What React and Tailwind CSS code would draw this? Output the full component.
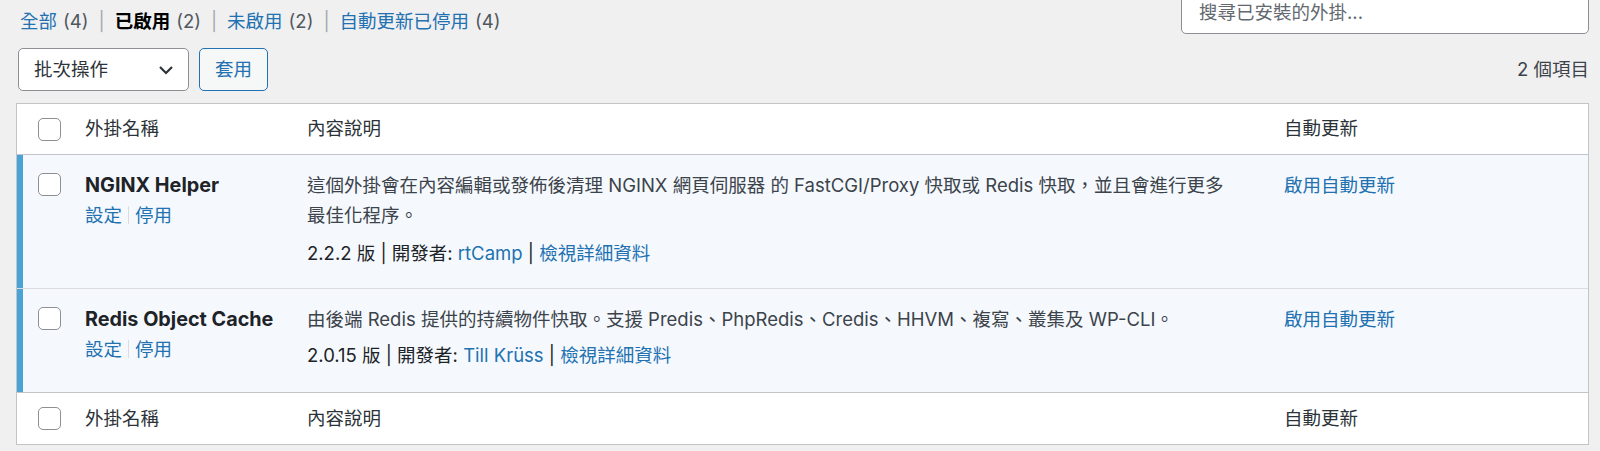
import { useState } from 'react'

const cols = 'grid grid-cols-[58px_222px_977px_1fr]'

function Checkbox() {
  return <span className="block w-[23px] h-[23px] rounded-[5px] border border-[#8c8f94] bg-white" />
}

function Filters() {
  const items = [
    { label: '全部', count: 4 },
    { label: '已啟用', count: 2, current: true },
    { label: '未啟用', count: 2 },
    { label: '自動更新已停用', count: 4 },
  ]
  return (
    <div className="pl-[4px] pt-[8px] leading-[27px] flex items-center text-[#50575e]">
      {items.map((it, i) => (
        <span key={it.label} className="flex items-center">
          {i > 0 && <span className="mx-[10px] text-[#a7aaad]">|</span>}
          <span className={it.current ? 'font-bold text-black' : 'text-[#2271b1]'}>{it.label}</span>
          <span className="ml-[6px]">({it.count})</span>
        </span>
      ))}
    </div>
  )
}

function PluginRow({ name, desc, version, author, last }) {
  return (
    <div className={`${cols} bg-[#f5f9fe] ${last ? '' : 'border-b border-[#dcdcde]'}`}>
      <div className="pl-[21px] pt-[18px] shadow-[inset_6px_0_0_#4aa3d6]"><Checkbox /></div>
      <div className="pl-[10px] pt-[15px] leading-[30px]">
        <div className="font-bold text-[#1d2327] text-[19.8px]">{name}</div>
        <div className="flex items-center text-[#2271b1]">
          <span>設定</span>
          <span className="mx-[6px] w-px h-[18px] bg-[#dcdcde]" />
          <span>停用</span>
        </div>
      </div>
      <div className={`pl-[10px] pr-[40px] pt-[15px] leading-[30px] ${last ? 'pb-[22px]' : 'pb-[20px]'}`}>
        <p className={`${last ? 'mb-[6px]' : 'mb-[8px]'} text-[#3c434a]`}>{desc}</p>
        <div className="text-[#1d2327]">
          {version} 版 | 開發者: <span className="text-[#2271b1]">{author}</span> | <span className="text-[#2271b1]">檢視詳細資料</span>
        </div>
      </div>
      <div className="pl-[10px] pt-[15px] leading-[30px] text-[#2271b1]">啟用自動更新</div>
    </div>
  )
}

function HeadRow({ top }) {
  return (
    <div className={`${cols} ${top ? 'h-[51px] border-b' : 'h-[52px] border-t'} items-center text-[#2c3338] border-[#c3c4c7]`}>
      <div className="pl-[21px]"><Checkbox /></div>
      <div className="pl-[10px]">外掛名稱</div>
      <div className="pl-[10px]">內容說明</div>
      <div className="pl-[10px]">自動更新</div>
    </div>
  )
}

export default function App() {
  const [bulk] = useState('批次操作')
  return (
    <div className="min-h-screen bg-[#f0f0f1] pl-[16px] pr-[11px] text-[18.5px] text-[#3c434a] font-['Inter','Noto_Sans_CJK_TC',sans-serif] overflow-hidden">
      <div className="flex items-start justify-between h-[48px]">
        <Filters />
        <div className="-mt-[8px] w-[408px] h-[42px] rounded-[5px] border border-[#8c8f94] bg-white px-[17px] flex items-center text-[#646970]">
          搜尋已安裝的外掛...
        </div>
      </div>

      <div className="flex items-start justify-between h-[55px]">
        <div className="flex items-start gap-[10px] ml-[2px]">
          <div className="w-[171px] h-[43px] rounded-[5px] border border-[#8c8f94] bg-white flex items-center justify-between pl-[15px] pr-[14px] text-[#2c3338]">
            <span>{bulk}</span>
            <svg width="16" height="10" viewBox="0 0 16 10" fill="none">
              <polyline points="2,2 8,8 14,2" stroke="#2c3338" strokeWidth="2.2" />
            </svg>
          </div>
          <div className="w-[69px] h-[43px] rounded-[5px] border border-[#2271b1] bg-[#f6f7f7] text-[#2271b1] flex items-center justify-center">
            套用
          </div>
        </div>
        <div className="pt-[8px] leading-[27px] text-[#3c434a]">2 個項目</div>
      </div>

      <div className="border border-[#c3c4c7] bg-white">
        <HeadRow top />
        <PluginRow
          name="NGINX Helper"
          desc="這個外掛會在內容編輯或發佈後清理 NGINX 網頁伺服器 的 FastCGI/Proxy 快取或 Redis 快取，並且會進行更多最佳化程序。"
          version="2.2.2"
          author="rtCamp"
        />
        <PluginRow
          name="Redis Object Cache"
          desc="由後端 Redis 提供的持續物件快取。支援 Predis、PhpRedis、Credis、HHVM、複寫、叢集及 WP-CLI。"
          version="2.0.15"
          author="Till Krüss"
          last
        />
        <HeadRow />
      </div>
    </div>
  )
}
